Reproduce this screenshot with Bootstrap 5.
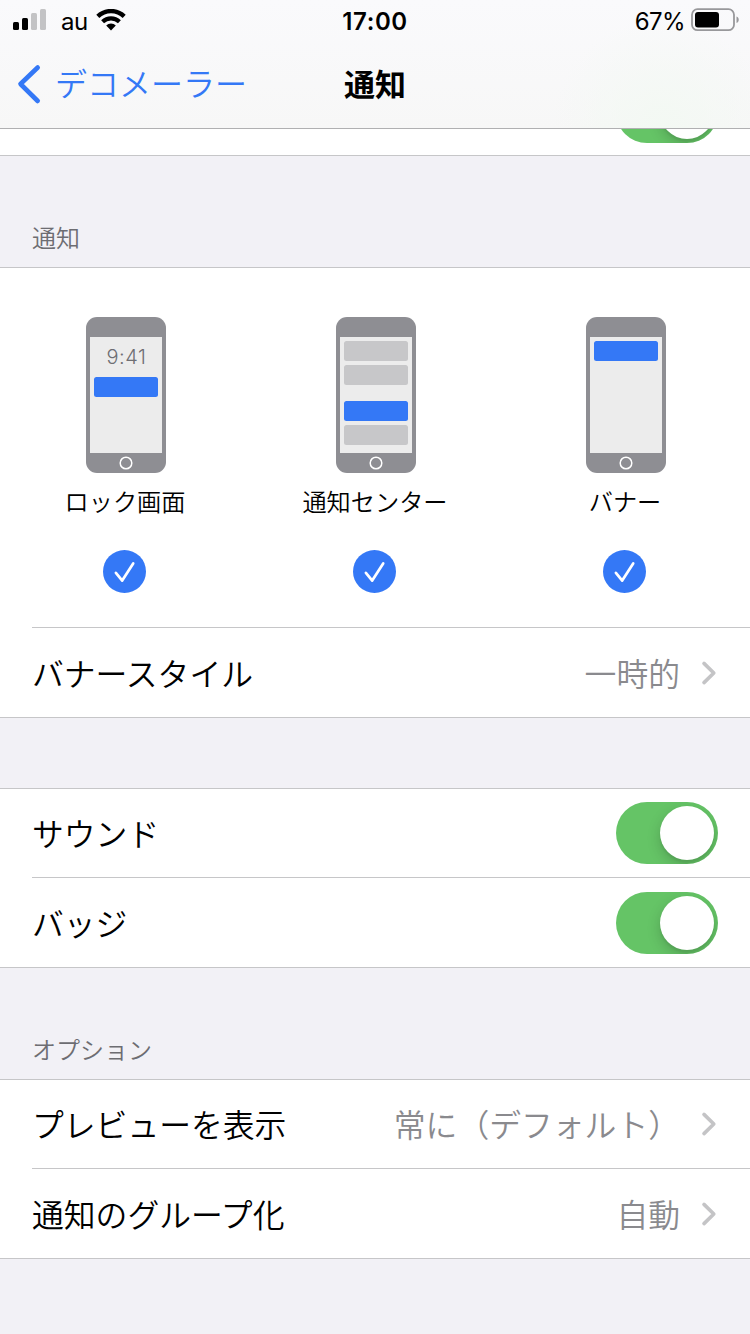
<!DOCTYPE html>
<html lang="ja">
<head>
<meta charset="utf-8">
<meta name="viewport" content="width=device-width, initial-scale=1">
<title>通知</title>
<link href="https://cdn.jsdelivr.net/npm/bootstrap@5.3.0/dist/css/bootstrap.min.css" rel="stylesheet">
<style>
  body { font-family: Inter, "Noto Sans CJK JP DemiLight", "Noto Sans CJK JP", sans-serif; font-size: 31.8px; line-height: 1; font-weight: 350; color: #000; background: #f2f1f6; width: 750px; height: 1334px; overflow: hidden; }
  .topbar { height: 129px; border-bottom: 1px solid #b0b0b2; background: radial-gradient(circle 110px at 662px 128px, #f3f9f3, rgba(248,248,248,0)), linear-gradient(#fafafc, #f7f7f7); }
  .status { height: 40px; font-size: 24px; font-weight: 400; padding-top: 3px; }
  .status-side { flex: 1 1 0; }
  .status svg { margin-top: -3px; }
  .signal { margin-left: 13px; }
  .carrier { margin-left: 14px; letter-spacing: -.4px; }
  .wifi { margin-left: 8px; }
  .battery { margin: 0 10px 0 6px; }
  .percent { letter-spacing: -.6px; }
  .clock { font-weight: 600; letter-spacing: .6px; }
  .titlebar { height: 88px; }
  .back { color: #3478f6; font-size: 32px; }
  .back span { position: relative; left: -1px; padding-top: 2px; }
  .page-title { font-family: "Noto Sans CJK JP", sans-serif; font-size: 31px; font-weight: 700; padding-bottom: 2px; }
  .group { border-top: 1px solid #c6c6c8; border-bottom: 1px solid #c6c6c8; background: #fff; }
  .group-head { color: #6d6d72; font-size: 24px; font-weight: 350; height: 111px; padding: 0 32px 13px; }
  .cell { height: 88px; margin-left: 32px; padding-right: 32px; }
  .cell + .cell, .ruled { border-top: 1px solid #c6c6c8; }
  .cell + .cell, .cell.ruled { height: 90px; }
  .cell > span:not(.toggle) { padding-top: 4px; }
  .value { color: #8a8a8e; }
  .chev { margin-left: 21px; }
  .partial { height: 27px; padding: 0 32px 12px; border-bottom: 1px solid #c6c6c8; }
  .toggle { width: 102px; height: 62px; border-radius: 31px; background: #65c466; padding: 4px; overflow: hidden; }
  .knob { width: 54px; height: 54px; border-radius: 50%; background: #fff; box-shadow: 0 5px 14px rgba(0,0,0,.18), 0 3px 2px rgba(0,0,0,.05); }
  .styles { height: 359px; padding-top: 49px; }
  .styles .phone { margin-left: 2px; }
  .style-name { font-size: 24.2px; line-height: 24px; margin-top: 18px; }
  .tick { margin: 35px 1px 0 0; }
  .gap-band { height: 70px; }
</style>
</head>
<body>
<svg class="d-none">
  <symbol id="chevron" viewBox="0 0 17 28"><path d="M3 4.4 12.8 14 3 23.6" fill="none" stroke="#c4c4c6" stroke-width="3.6" stroke-linecap="round" stroke-linejoin="round"/></symbol>
  <symbol id="tick" viewBox="0 0 43 43"><circle cx="21.5" cy="21.5" r="21.5" fill="#3478f6"/><path d="M12.9 22.9 19.2 30.6 30.2 13.4" fill="none" stroke="#fff" stroke-width="2.7" stroke-linecap="round" stroke-linejoin="round"/></symbol>
  <symbol id="phone" viewBox="0 0 80 156"><rect width="80" height="156" rx="11" fill="#8e8e93"/><rect x="4" y="20" width="72" height="116" fill="#ececec"/><circle cx="40" cy="146" r="5.8" fill="none" stroke="#fff" stroke-width="1.5"/></symbol>
</svg>

<header class="topbar">
  <div class="status d-flex align-items-center">
    <div class="status-side d-flex align-items-center">
      <svg class="signal" width="34" height="22" viewBox="0 0 34 22"><rect y="13" width="6" height="8" rx="1.5"/><rect x="9" y="9" width="6" height="12" rx="1.5"/><rect x="18" y="4" width="6" height="17" rx="1.5" fill="#c3c3c5"/><rect x="27" y="0" width="6" height="21" rx="1.5" fill="#c3c3c5"/></svg>
      <span class="carrier">au</span>
      <svg class="wifi" width="30" height="22" viewBox="0 0 30 22"><path d="M1.8 7.4a18.8 18.8 0 0 1 26.4 0" fill="none" stroke="#000" stroke-width="4.3"/><path d="M6.6 12.8a12 12 0 0 1 16.8 0" fill="none" stroke="#000" stroke-width="4.1"/><path d="M10.2 16.6a6.6 6.6 0 0 1 9.6 0L15 21.6Z"/></svg>
    </div>
    <div class="clock">17:00</div>
    <div class="status-side d-flex align-items-center justify-content-end">
      <span class="percent">67%</span>
      <svg class="battery" width="49" height="24" viewBox="0 0 49 24"><rect x="1" y="1.2" width="42" height="21" rx="5.5" fill="none" stroke="#98989b" stroke-width="1.8"/><rect x="4" y="4" width="24" height="15.5" rx="3"/><path d="M45.5 8.5c3 1 3 5.5 0 6.5z" fill="#98989b"/></svg>
    </div>
  </div>
  <nav class="titlebar d-flex align-items-center position-relative">
    <a class="back d-flex align-items-center text-decoration-none" href="#">
      <svg width="56" height="44" viewBox="0 0 56 44"><path d="M37.7 5.5 20.5 22 37.7 39" fill="none" stroke="#3478f6" stroke-width="4.6" stroke-linecap="round" stroke-linejoin="round"/></svg>
      <span>デコメーラー</span>
    </a>
    <h1 class="page-title position-absolute start-50 translate-middle-x m-0">通知</h1>
  </nav>
</header>

<main>
  <div class="partial bg-white d-flex align-items-end justify-content-end overflow-hidden">
    <span class="toggle d-flex justify-content-end flex-shrink-0"><span class="knob"></span></span>
  </div>

  <h2 class="group-head d-flex align-items-end m-0">通知</h2>
  <section class="group">
    <div class="styles row g-0 text-center">
      <div class="col-4 d-flex flex-column align-items-center">
        <svg class="phone" width="80" height="156"><use href="#phone"/><text x="40.5" y="47" text-anchor="middle" font-size="20" font-weight="350" letter-spacing=".6" fill="#6e6e73">9:41</text><rect x="8" y="60" width="64" height="20" rx="2.5" fill="#3478f6"/></svg>
        <div class="style-name">ロック画面</div>
        <svg class="tick" width="43" height="43"><use href="#tick"/></svg>
      </div>
      <div class="col-4 d-flex flex-column align-items-center">
        <svg class="phone" width="80" height="156"><use href="#phone"/><g fill="#c7c7c9"><rect x="8" y="24" width="64" height="20" rx="2.5"/><rect x="8" y="48" width="64" height="20" rx="2.5"/><rect x="8" y="108" width="64" height="20" rx="2.5"/></g><rect x="8" y="84" width="64" height="20" rx="2.5" fill="#3478f6"/></svg>
        <div class="style-name">通知センター</div>
        <svg class="tick" width="43" height="43"><use href="#tick"/></svg>
      </div>
      <div class="col-4 d-flex flex-column align-items-center">
        <svg class="phone" width="80" height="156"><use href="#phone"/><rect x="8" y="24" width="64" height="20" rx="2.5" fill="#3478f6"/></svg>
        <div class="style-name">バナー</div>
        <svg class="tick" width="43" height="43"><use href="#tick"/></svg>
      </div>
    </div>
    <div class="cell ruled d-flex align-items-center">
      <span class="me-auto">バナースタイル</span><span class="value">一時的</span><svg class="chev" width="17" height="28"><use href="#chevron"/></svg>
    </div>
  </section>

  <div class="gap-band"></div>

  <section class="group">
    <div class="cell d-flex align-items-center"><span class="me-auto">サウンド</span><span class="toggle d-flex justify-content-end"><span class="knob"></span></span></div>
    <div class="cell d-flex align-items-center"><span class="me-auto">バッジ</span><span class="toggle d-flex justify-content-end"><span class="knob"></span></span></div>
  </section>

  <h2 class="group-head d-flex align-items-end m-0">オプション</h2>
  <section class="group">
    <div class="cell d-flex align-items-center"><span class="me-auto">プレビューを表示</span><span class="value">常に（デフォルト）</span><svg class="chev" width="17" height="28"><use href="#chevron"/></svg></div>
    <div class="cell d-flex align-items-center"><span class="me-auto">通知のグループ化</span><span class="value">自動</span><svg class="chev" width="17" height="28"><use href="#chevron"/></svg></div>
  </section>
</main>
<script src="https://cdn.jsdelivr.net/npm/bootstrap@5.3.0/dist/js/bootstrap.bundle.min.js"></script>
</body>
</html>
